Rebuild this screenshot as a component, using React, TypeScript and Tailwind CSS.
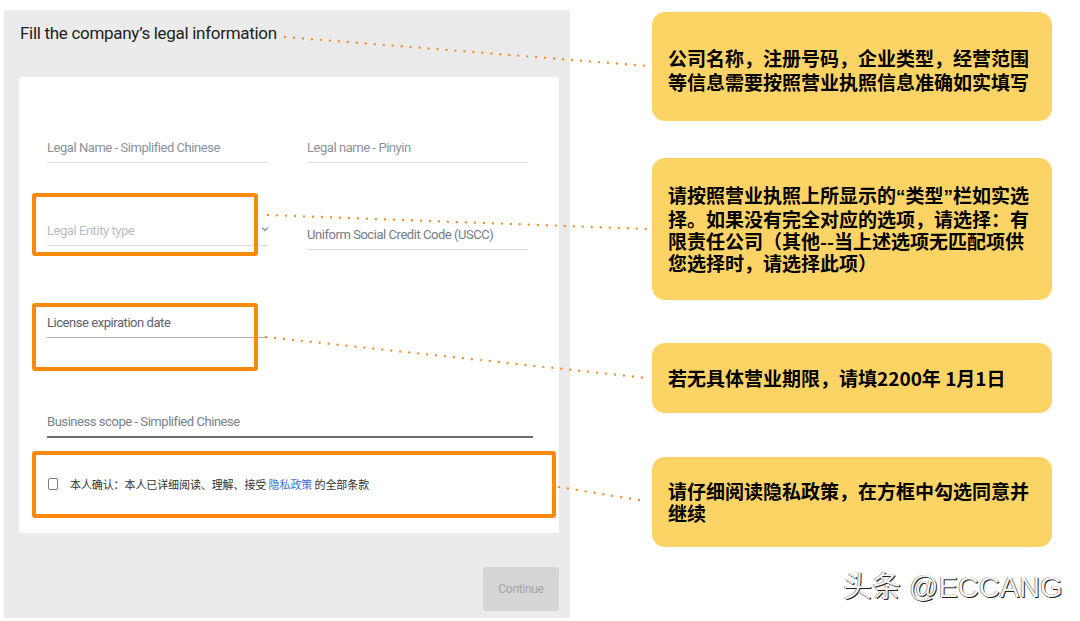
import React from 'react';

const Field: React.FC<{ label: string; labelClass: string; lineClass: string; chevron?: boolean; className?: string }> = ({
  label,
  labelClass,
  lineClass,
  chevron,
  className = '',
}) => (
  <div className={`relative pb-[6px] ${lineClass} ${className}`}>
    <div className={`text-[13px] leading-[16px] tracking-[-0.45px] ${labelClass}`}>{label}</div>
    {chevron && (
      <svg className="absolute right-[-1px] top-[3px]" width="8" height="6" viewBox="0 0 8 6">
        <path d="M1 1.5 L4 4.5 L7 1.5" fill="none" stroke="#8a8f99" strokeWidth="1.3" />
      </svg>
    )}
  </div>
);

const Callout: React.FC<{ lines: React.ReactNode[]; className: string; leading: string }> = ({ lines, className, leading }) => (
  <div className={`flex w-[400px] flex-col justify-center rounded-[13px] bg-[#fcd466] pl-[16px] ${className}`}>
    {lines.map((l, i) => (
      <div key={i} className={`whitespace-nowrap text-[19px] font-bold text-black ${leading}`}>
        {l}
      </div>
    ))}
  </div>
);

const Q: React.FC<{ c: string }> = ({ c }) => <span className="font-['Liberation_Sans',sans-serif]">{c}</span>;

export default function App() {
  const dots = [
    { x1: 285, y1: 37, x2: 648, y2: 66 },
    { x1: 268, y1: 215, x2: 648, y2: 229 },
    { x1: 266, y1: 337, x2: 647, y2: 378 },
    { x1: 559, y1: 487, x2: 645, y2: 501 },
  ];

  return (
    <div className="relative flex h-[621px] w-[1080px] overflow-hidden bg-white font-['Roboto','Noto_Sans_CJK_SC',sans-serif]">
      {/* left: form panel */}
      <div className="ml-[4px] mt-[10px] flex h-[608px] w-[566px] flex-col bg-[#ebebeb] pl-[15px] pr-[11px]">
        <div className="mt-[13px] h-[20px] pl-[1px] text-[17px] leading-[20px] tracking-[-0.3px] text-[#222]">
          Fill the company’s legal information
        </div>

        <div className="relative mt-[34px] h-[456px] w-[540px] rounded-[3px] bg-white pl-[28px] pt-[63px]">
          <div className="grid w-[481px] grid-cols-[221px_221px] gap-x-[39px]">
            <Field label="Legal Name - Simplified Chinese" labelClass="text-[#8c919b]" lineClass="border-b border-[#dcdfe4]" />
            <Field label="Legal name - Pinyin" labelClass="text-[#8c919b]" lineClass="border-b border-[#dcdfe4]" />
          </div>

          <div className="mt-[60px] grid w-[481px] grid-cols-[221px_221px] items-start gap-x-[39px]">
            <Field label="Legal Entity type" labelClass="text-[#b9bdc5]" lineClass="border-b border-[#d5d9e0]" chevron />
            <Field
              label="Uniform Social Credit Code (USCC)"
              labelClass="text-[#767b86]"
              lineClass="border-b border-[#d5d9e0]"
              className="mt-[4px]"
            />
          </div>

          <div className="mt-[65px] w-[221px]">
            <Field label="License expiration date" labelClass="text-[#5c6270]" lineClass="border-b border-[#a9adb5]" />
          </div>

          <div className="mt-[76px] w-[486px]">
            <Field label="Business scope - Simplified Chinese" labelClass="text-[#7b808a]" lineClass="border-b-2 border-[#6b6b6b]" />
          </div>

          <div className="mt-[38px] flex h-[16px] items-center">
            <span className="ml-[1px] h-[12px] w-[10px] rounded-[2px] border border-[#7a7a7a]" />
            <span className="ml-[12px] text-[11px] leading-[16px] tracking-[-0.1px] text-[#333] font-['Noto_Sans_CJK_SC',sans-serif]">
              本人确认：本人已详细阅读、理解、接受 <span className="text-[#3d6fd6]">隐私政策</span> 的全部条款
            </span>
          </div>

          {/* annotation frames */}
          <div className="absolute left-[13px] top-[116px] h-[63px] w-[226px] rounded-[3px] border-[4px] border-[#fb8a0c]" />
          <div className="absolute left-[13px] top-[226px] h-[68px] w-[226px] rounded-[3px] border-[4px] border-[#fb8a0c]" />
          <div className="absolute left-[13px] top-[374px] h-[67px] w-[524px] rounded-[3px] border-[4px] border-[#fb8a0c]" />
        </div>

        <div className="mt-[34px] flex justify-end">
          <button className="h-[44px] w-[76px] rounded-[3px] bg-[#d6d6d6] text-[12px] tracking-[-0.3px] text-[#a3a3a3]">
            Continue
          </button>
        </div>
      </div>

      {/* right: callouts */}
      <div className="ml-[82px] mt-[12px] flex flex-col font-['Noto_Sans_CJK_SC',sans-serif]">
        <Callout
          className="h-[109px] pt-[6px]"
          leading="leading-[24px]"
          lines={['公司名称，注册号码，企业类型，经营范围', '等信息需要按照营业执照信息准确如实填写']}
        />
        <Callout
          className="mt-[37px] h-[142px]"
          leading="leading-[22px]"
          lines={[
            <>
              请按照营业执照上所显示的<Q c="“" />类型<Q c="”" />栏如实选
            </>,
            '择。如果没有完全对应的选项，请选择：有',
            '限责任公司（其他--当上述选项无匹配项供',
            '您选择时，请选择此项）',
          ]}
        />
        <Callout className="mt-[43px] h-[70px]" leading="leading-[24px]" lines={['若无具体营业期限，请填2200年 1月1日']} />
        <Callout
          className="mt-[44px] h-[90px]"
          leading="leading-[22px]"
          lines={['请仔细阅读隐私政策，在方框中勾选同意并', '继续']}
        />
        <div className="ml-[191px] mt-[24px] whitespace-nowrap text-[29px] leading-[32px] text-[#f4f4f4] [text-shadow:1px_1px_0_#222,-0.5px_-0.5px_0_#555] font-['Liberation_Sans','Noto_Sans_CJK_SC',sans-serif]">
          头条 @ECCANG
        </div>
      </div>

      {/* dotted leader lines */}
      <svg className="pointer-events-none absolute left-0 top-0" width="1080" height="621">
        {dots.map((d, i) => (
          <line
            key={i}
            x1={d.x1}
            y1={d.y1}
            x2={d.x2}
            y2={d.y2}
            stroke="#f0902c"
            strokeWidth="2.4"
            strokeLinecap="round"
            strokeDasharray="0 9"
          />
        ))}
      </svg>
    </div>
  );
}
